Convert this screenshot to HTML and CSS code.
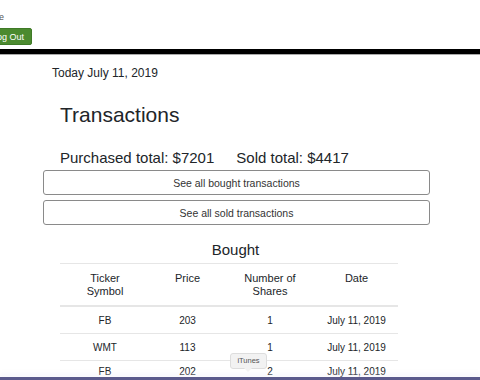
FILE: index.html
```html
<!DOCTYPE html>
<html lang="en">
<head>
  <meta charset="UTF-8">
  <title>Transactions</title>
  <link rel="stylesheet" href="styles.css">
</head>
<body>

  <div class="topbar">
    <div class="user">e</div>
    <button class="logout">Log Out</button>
  </div>
  <div class="divider"></div>

  <div class="main">
    <div class="today">Today July 11, 2019</div>
    <h1 class="title">Transactions</h1>
    <div class="totals">
      <span>Purchased total: $7201</span>
      <span>Sold total: $4417</span>
    </div>
    <button class="see-all">See all bought transactions</button>
    <button class="see-all">See all sold transactions</button>

    <h2 class="table-title">Bought</h2>
    <div class="tx-table">
      <div class="tx-row head">
        <div>Ticker<br>Symbol</div>
        <div>Price</div>
        <div>Number of<br>Shares</div>
        <div>Date</div>
      </div>
      <div class="tx-row">
        <div>FB</div><div>203</div><div>1</div><div>July 11, 2019</div>
      </div>
      <div class="tx-row">
        <div>WMT</div><div>113</div><div>1</div><div>July 11, 2019</div>
      </div>
      <div class="tx-row">
        <div>FB</div><div>202</div><div>2</div><div>July 11, 2019</div>
      </div>
    </div>
  </div>

  <!-- dock -->
  <div class="dock-tip">iTunes</div>
  <div class="dock"></div>

</body>
</html>
```

FILE: styles.css
```css
html, body {
  margin: 0; padding: 0;
  background: #fff;
  font-family: "Liberation Sans", Arial, sans-serif;
  color: #212529;
  overflow: hidden;
  height: 100%;
}
.topbar {
  height: 49px;
  position: relative;
}
.user {
  font-size: 9px; color: #555;
  padding-top: 12px; line-height: 10px;
  margin-left: -1px;
}
.logout {
  display: block;
  margin: 6px 0 0 -18px;
  height: 17px; width: 50px;
  padding: 0 0 0 2px;
  background: #4b8a2f; color: #fff;
  border: 1px solid #3f7a27; border-radius: 2px;
  font-family: inherit; font-size: 9px;
  text-align: center;
}
.divider {
  height: 5px;
  background: #000;
  border-bottom: 1px solid #aaa;
}

.main {
  padding: 0 50px 0 43px;
}
.today {
  font-size: 12px; line-height: 15px;
  margin: 11px 0 0 9px;
}
.title {
  font-size: 21px; font-weight: normal;
  line-height: 25px;
  margin: 21px 0 0 17px;
}
.totals {
  display: flex; gap: 22px;
  font-size: 15px; line-height: 19px;
  margin: 21px 0 3px 17px;
}
.see-all {
  display: block;
  width: 100%; height: 25px;
  margin: 0 0 5px 0;
  background: #fff;
  border: 1px solid #8a8a8a; border-radius: 3px;
  font-family: inherit; font-size: 10.5px; color: #333;
}
.table-title {
  font-size: 15px; font-weight: normal;
  line-height: 18px;
  text-align: center;
  margin: 16px 0 4px 0;
  padding-right: 2px;
}
.tx-table {
  margin-left: 17px;
  width: 338px;
  font-size: 10px;
}
.tx-row {
  display: grid;
  grid-template-columns: 90px 75px 90px 83px;
  border-top: 1px solid #e6e6e6;
  text-align: center;
  height: 26px; align-items: center;
}
.tx-row.head {
  height: 43px;
  align-items: start;
  padding-top: 8px; box-sizing: border-box;
  font-size: 11px; line-height: 13px;
  border-bottom: 1px solid #e6e6e6;
}
.tx-row:last-child { line-height: 10px; align-items: start; padding-top: 6px; box-sizing: border-box; }

.dock {
  position: fixed; left: 0; right: 0; bottom: 0;
  height: 3px;
  background: #5b5a8c;
  box-shadow: 0 -3px 4px rgba(235,233,248,0.5);
}
.dock-tip {
  position: fixed; left: 230px; bottom: 11px;
  width: 35px; height: 14px;
  background: #f2f2f2; border: 1px solid #ddd; border-radius: 3px;
  font-size: 7.5px; line-height: 14px; color: #555;
  text-align: center; z-index: 2;
}
.dock-tip::after {
  content: ""; position: absolute; left: 13px; bottom: -4px;
  border: 4px solid transparent; border-bottom: 0;
  border-top-color: #f2f2f2;
}
```
